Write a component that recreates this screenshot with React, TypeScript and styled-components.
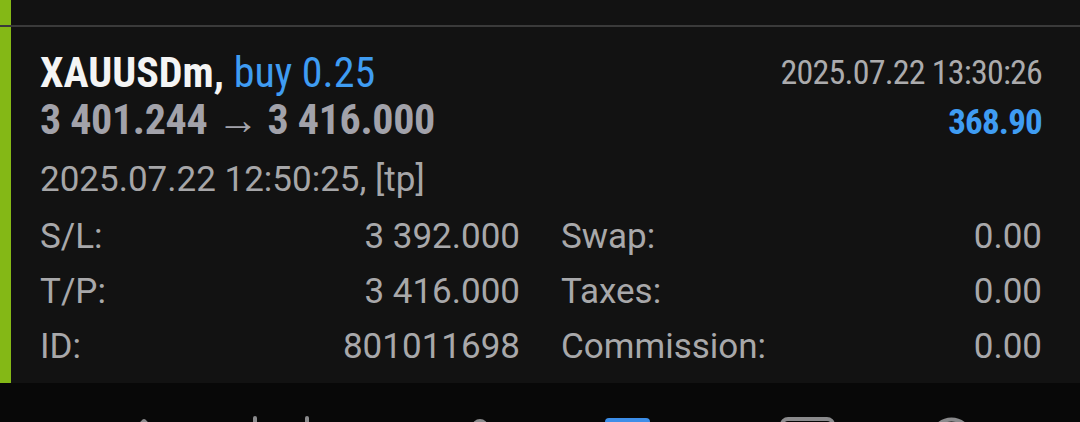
import { Fragment } from "react";
import styled, { createGlobalStyle } from "styled-components";

const GlobalStyle = createGlobalStyle`
	* {
		box-sizing: border-box;
	}
	body {
		margin: 0;
		background-color: #080808;
		font-family: Roboto, "Liberation Sans", sans-serif;
	}
`;

const ACCENT = "#84b816";
const BLUE = "#3f9cf2";

const Screen = styled.div`
	width: 1080px;
	height: 422px;
	display: flex;
	flex-direction: column;
	overflow: hidden;
	background-color: #080808;
`;

const PrevItem = styled.div`
	height: 25px;
	flex-shrink: 0;
	background-color: #121212;
	border-left: 11px solid ${ACCENT};
`;

const Divider = styled.div`
	height: 2px;
	flex-shrink: 0;
	background-color: #3a3a3a;
`;

const Item = styled.div`
	height: 356px;
	flex-shrink: 0;
	background-color: #121212;
	border-left: 11px solid ${ACCENT};
	padding: 22px 38px 0 29px;
	display: flex;
	flex-direction: column;
`;

const Header = styled.div`
	display: flex;
	justify-content: space-between;
`;

const HeaderCol = styled.div<{ $align?: "left" | "right" }>`
	display: flex;
	flex-direction: column;
	align-items: ${(p) => (p.$align === "right" ? "flex-end" : "flex-start")};
`;

const Condensed = styled.div<{
	$size: number;
	$bold?: boolean;
	$color: string;
	$shift?: number;
	$spacing?: number;
}>`
	font-family: "Roboto Condensed", Roboto, "Liberation Sans", sans-serif;
	font-stretch: condensed;
	font-size: ${(p) => p.$size}px;
	font-weight: ${(p) => (p.$bold ? 700 : 400)};
	letter-spacing: ${(p) => p.$spacing ?? 0}px;
	color: ${(p) => p.$color};
	line-height: 47px;
	white-space: nowrap;
	margin-top: ${(p) => p.$shift ?? 0}px;
`;

const Side = styled.span`
	font-weight: 400;
	color: ${BLUE};
`;

const OpenTime = styled.div`
	font-size: 35px;
	line-height: 56px;
	margin-top: 6px;
	color: #a6a6a8;
	white-space: nowrap;
`;

const Details = styled.div`
	margin-top: 1px;
	display: grid;
	grid-template-columns: 280px 200px 1fr auto;
	grid-auto-rows: 55px;
	font-size: 35px;
	line-height: 55px;
	color: #a8a8aa;
`;

const Label = styled.div`
	white-space: nowrap;
`;

const Value = styled.div`
	text-align: right;
	white-space: nowrap;
`;

const Label2 = styled.div`
	padding-left: 41px;
	white-space: nowrap;
`;

const NavBar = styled.div`
	flex: 1;
	display: grid;
	grid-template-columns: repeat(6, 1fr);
	overflow: hidden;
`;

const NavSlot = styled.div`
	display: flex;
	justify-content: center;
`;

const NavIcon = styled.svg`
	width: 160px;
	height: 70px;
	flex-shrink: 0;
`;

const GREY = "#8a8a8c";

const rows = [
	{ label: "S/L:", value: "3 392.000", label2: "Swap:", value2: "0.00" },
	{ label: "T/P:", value: "3 416.000", label2: "Taxes:", value2: "0.00" },
	{ label: "ID:", value: "801011698", label2: "Commission:", value2: "0.00" },
];

// only the tops of the nav icons show below the list
const BottomNav = () => (
	<NavBar>
		<NavSlot>
			<NavIcon viewBox="0 0 160 70">
				<path d="M134 38 L134 62 M126 46 L134 38 L142 46" stroke={GREY} strokeWidth="4" strokeLinecap="round" strokeLinejoin="round" fill="none" />
			</NavIcon>
		</NavSlot>
		<NavSlot>
			<NavIcon viewBox="0 0 160 70">
				<path d="M65 35 L65 62 M117 35 L117 62" stroke={GREY} strokeWidth="4" strokeLinecap="round" fill="none" />
			</NavIcon>
		</NavSlot>
		<NavSlot>
			<NavIcon viewBox="0 0 160 70">
				<circle cx="110" cy="44" r="6" stroke={GREY} strokeWidth="4" fill="none" />
			</NavIcon>
		</NavSlot>
		<NavSlot>
			<NavIcon viewBox="0 0 160 70">
				<rect x="55" y="35" width="45" height="40" rx="4" fill="#3d8ee8" />
			</NavIcon>
		</NavSlot>
		<NavSlot>
			<NavIcon viewBox="0 0 160 70">
				<rect x="52" y="36" width="51" height="40" rx="6" stroke={GREY} strokeWidth="4" fill="none" />
			</NavIcon>
		</NavSlot>
		<NavSlot>
			<NavIcon viewBox="0 0 160 70">
				<circle cx="41.5" cy="56" r="19.5" stroke={GREY} strokeWidth="4" fill="none" />
			</NavIcon>
		</NavSlot>
	</NavBar>
);

export default function App() {
	return (
		<>
			<GlobalStyle />
			<Screen>
				<PrevItem />
				<Divider />
				<Item>
					<Header>
						<HeaderCol>
							<Condensed $size={42} $bold $color="#f4f4f4">
								XAUUSDm, <Side>buy 0.25</Side>
							</Condensed>
							<Condensed $size={42} $bold $color="#a2a2aa" $spacing={-0.35}>
								3 401.244 → 3 416.000
							</Condensed>
						</HeaderCol>
						<HeaderCol $align="right">
							<Condensed $size={34} $color="#ababad" $spacing={-0.8}>
								2025.07.22 13:30:26
							</Condensed>
							<Condensed $size={35} $bold $color={BLUE} $spacing={-0.8} $shift={3}>
								368.90
							</Condensed>
						</HeaderCol>
					</Header>
					<OpenTime>2025.07.22 12:50:25, [tp]</OpenTime>
					<Details>
						{rows.map((r) => (
							<Fragment key={r.label}>
								<Label>{r.label}</Label>
								<Value>{r.value}</Value>
								<Label2>{r.label2}</Label2>
								<Value>{r.value2}</Value>
							</Fragment>
						))}
					</Details>
				</Item>
				<BottomNav />
			</Screen>
		</>
	);
}
